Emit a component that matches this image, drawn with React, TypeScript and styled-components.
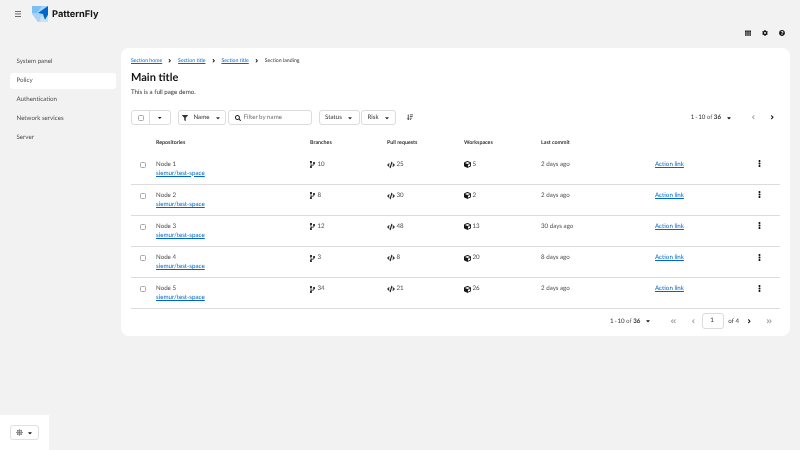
import React from 'react';
import styled, { createGlobalStyle } from 'styled-components';
import {
  FaCaretDown, FaFilter, FaSearch, FaCodeBranch, FaCode, FaCube, FaEllipsisV, FaTh, FaCog,
  FaQuestionCircle, FaAngleLeft, FaAngleRight, FaAngleDoubleLeft, FaAngleDoubleRight, FaSun, FaSortAmountDown,
} from 'react-icons/fa';

const Global = createGlobalStyle`
  html, body { margin: 0; padding: 0; background: #f2f2f2; }
  body { font-family: "Lato", "Liberation Sans", sans-serif; font-size: 6.2px; color: #151515; text-rendering: geometricPrecision; }
  * { box-sizing: border-box; }
`;

const Page = styled.div`
  width: 800px; height: 450px; display: grid; overflow: hidden; will-change: transform;
  grid-template-columns: 121px 1fr; grid-template-rows: 48px 1fr;
`;
const Masthead = styled.header`
  grid-column: 1 / 3; display: flex; align-items: flex-start; padding: 6px 0 0 15px;
`;
const Burger = styled.svg`
  margin-top: 5px; width: 6px; height: 6px;
`;
const Brand = styled.div`
  display: flex; align-items: center; gap: 3px; margin-left: 11px; height: 16px;
`;
const BrandName = styled.span`
  font-family: "Inter", sans-serif; font-size: 9.3px; font-weight: 700; color: #151515;
`;
const Tools = styled.div`
  margin-left: auto; display: flex; gap: 11px; padding: 24px 15px 0 0; font-size: 6px; color: #151515;
  span { display: flex; }
`;
const Side = styled.aside`
  display: flex; flex-direction: column;
`;
const Nav = styled.nav`
  display: flex; flex-direction: column; padding: 6px 5px 0 10px; gap: 3px;
`;
const NavItem = styled.div<{ $active?: boolean }>`
  height: 16px; line-height: 16px; padding-left: 6.5px; border-radius: 3px; font-size: 6.2px; color: #4d4d4d;
  background: ${p => (p.$active ? '#fff' : 'transparent')};
`;
const ThemeDock = styled.div`
  margin-top: auto; width: 49px; height: 35px; background: #fff; padding: 10px;
`;
const ThemeButton = styled.div`
  width: 29px; height: 15px; border: 1px solid #e0e0e0; border-radius: 3px; display: flex; align-items: center;
  justify-content: center; gap: 4px; color: #707070; font-size: 7px;
  svg + svg { font-size: 6px; color: #151515; }
`;
const Card = styled.main`
  width: 669px; height: 288px; background: #fff; border-radius: 8px; padding: 9.5px 10px 0;
  display: flex; flex-direction: column;
`;
const Crumbs = styled.div`
  display: flex; align-items: center; height: 7px; font-size: 5.2px; color: #333;
`;
const Link = styled.a`
  color: #0066cc; text-decoration: underline; text-underline-offset: 1px;
`;
const CrumbSep = styled.span`
  display: flex; margin: 0 5.2px; font-size: 5.5px; color: #151515;
`;
const Title = styled.h1`
  margin: 5.5px 0 0; font-size: 11px; line-height: 15px; font-weight: 700; color: #151515;
`;
const Lead = styled.p`
  margin: 3.5px 0 0; font-size: 6.2px; line-height: 8px; color: #333;
`;
const Toolbar = styled.div`
  display: flex; align-items: center; margin-top: 13.5px; height: 15px; gap: 2px;
`;
const Control = styled.div<{ $w: number; $ml?: number }>`
  width: ${p => p.$w}px; height: 15px; margin-left: ${p => p.$ml ?? 0}px; border: 1px solid #dcdcdc; border-radius: 3px;
  display: flex; align-items: center; justify-content: center; gap: 5px; font-size: 6.2px; color: #333; background: #fff;
  svg { flex: none; }
`;
const SplitControl = styled.div`
  display: flex; width: 40px; height: 15px; border: 1px solid #dcdcdc; border-radius: 3px; align-items: center;
`;
const SplitPart = styled.div<{ $divider?: boolean }>`
  flex: ${p => (p.$divider ? '0 0 18px' : 1)}; height: 100%; display: flex; align-items: center; justify-content: center;
  border-right: ${p => (p.$divider ? '1px solid #dcdcdc' : 'none')}; font-size: 5.5px; color: #151515;
`;
const Check = styled.span`
  display: block; width: 6px; height: 6px; border: 1px solid #a8a8a8; border-radius: 1.5px; background: #fff;
`;
const Search = styled(Control)`
  justify-content: flex-start; padding-left: 6.5px; gap: 2.5px; color: #6a6e73; svg { color: #151515; }
`;
const SortIcon = styled.span`
  display: flex; margin-left: 8.5px; font-size: 6.5px; color: #333;
`;
const PagerText = styled.span`
  word-spacing: -0.6px; letter-spacing: -0.1px;
`;
const Pager = styled.div`
  margin-left: auto; display: flex; align-items: center; padding-right: 5px; font-size: 6.2px; color: #333;
`;
const Muted = styled.span`
  color: #555; margin: 0 1.5px;
`;
const Strong = styled.span`
  font-weight: 700;
`;
const Caret = styled.span`
  display: flex; margin-left: 5px; font-size: 6px; color: #151515;
`;
const PageBtn = styled.span<{ $off?: boolean; $ml: number }>`
  display: flex; margin-left: ${p => p.$ml}px; font-size: 6.5px; color: ${p => (p.$off ? '#a8a8a8' : '#151515')};
`;
const Grid = `display: grid; grid-template-columns: 25px 154px 77px 77px 77px 114px 104px 21px;`;
const Head = styled.div`
  ${Grid} margin-top: 11px; height: 17.5px; padding-bottom: 4.5px; align-items: center; font-size: 5.3px; font-weight: 700; color: #333;
`;
const Row = styled.div`
  ${Grid} height: 31.2px; padding-top: 7px; border-bottom: 1px solid #dcdcdc; font-size: 6.2px; color: #4d4d4d;
`;
const CheckCell = styled.div`
  padding: 1px 0 0 9px;
`;
const NameCell = styled.div`
  display: flex; flex-direction: column; gap: 1px; line-height: 8px;
`;
const Cell = styled.div`
  display: flex; align-items: center; gap: 1.5px; height: 8px; line-height: 8px;
  svg { color: #151515; flex: none; }
`;
const BranchIcon = styled(FaCodeBranch)`
  margin-left: -1px;
`;
const Kebab = styled.div`
  font-size: 7px; color: #151515; margin: -0.5px 0 0 -3.5px; line-height: 8px;
`;
const Footer = styled.div`
  display: flex; align-items: center; justify-content: flex-end; height: 24px; font-size: 6.2px; color: #333; padding-right: 8px;
`;
const PageInput = styled.div`
  width: 22px; height: 16px; margin: 0 4px 0 6px; border: 1px solid #dcdcdc; border-radius: 3px; padding-left: 7px; line-height: 14px;
`;

const rows = [
  ['Node 1', '10', '25', '5', '2 days ago'],
  ['Node 2', '8', '30', '2', '2 days ago'],
  ['Node 3', '12', '48', '13', '30 days ago'],
  ['Node 4', '3', '8', '20', '8 days ago'],
  ['Node 5', '34', '21', '26', '2 days ago'],
];

const Logo = () => (
  <svg width="17" height="16" viewBox="0 0 17 16">
    <polygon points="0,0 16,0 16,16 6,16 0,8" fill="#a9d2f5" />
    <polygon points="0,0 10,0 5,7 0,7" fill="#7cc0f2" />
    <polygon points="16,0 6,7 11,8 13,14 16,9" fill="#0066cc" />
    <polygon points="10,9 13,14 16,9 16,16 7,16" fill="#c4e2f8" />
  </svg>
);

export default function App() {
  return (
    <Page>
      <Global />
      <Masthead>
        <Burger viewBox="0 0 6 6" fill="#333">
          <rect y="0.2" width="6" height="0.7" /><rect y="2.6" width="6" height="0.7" /><rect y="5" width="6" height="0.7" />
        </Burger>
        <Brand><Logo /><BrandName>PatternFly</BrandName></Brand>
        <Tools>
          <span><FaTh /></span>
          <span><FaCog /></span>
          <span><FaQuestionCircle /></span>
        </Tools>
      </Masthead>
      <Side>
        <Nav>
          <NavItem>System panel</NavItem>
          <NavItem $active>Policy</NavItem>
          <NavItem>Authentication</NavItem>
          <NavItem>Network services</NavItem>
          <NavItem>Server</NavItem>
        </Nav>
        <ThemeDock>
          <ThemeButton><FaSun /><FaCaretDown /></ThemeButton>
        </ThemeDock>
      </Side>
      <Card>
        <Crumbs>
          <Link>Section home</Link><CrumbSep><FaAngleRight /></CrumbSep>
          <Link>Section title</Link><CrumbSep><FaAngleRight /></CrumbSep>
          <Link>Section title</Link><CrumbSep><FaAngleRight /></CrumbSep>
          <span>Section landing</span>
        </Crumbs>
        <Title>Main title</Title>
        <Lead>This is a full page demo.</Lead>
        <Toolbar>
          <SplitControl>
            <SplitPart $divider><Check /></SplitPart>
            <SplitPart><FaCaretDown /></SplitPart>
          </SplitControl>
          <Control $w={48} $ml={4.5}><FaFilter size={6} />Name<FaCaretDown size={6} /></Control>
          <Search $w={84}><FaSearch size={6} />Filter by name</Search>
          <Control $w={41} $ml={5}>Status<FaCaretDown size={6} /></Control>
          <Control $w={35} $ml={-0.5}>Risk<FaCaretDown size={6} /></Control>
          <SortIcon><FaSortAmountDown /></SortIcon>
          <Pager>
            <PagerText>1 - 10</PagerText><Muted>of</Muted><Strong>36</Strong><Caret><FaCaretDown /></Caret>
            <PageBtn $off $ml={18}><FaAngleLeft /></PageBtn>
            <PageBtn $ml={12}><FaAngleRight /></PageBtn>
          </Pager>
        </Toolbar>
        <Head>
          <span /><span>Repositories</span><span>Branches</span><span>Pull requests</span><span>Workspaces</span><span>Last commit</span>
        </Head>
        {rows.map(r => (
          <Row key={r[0]}>
            <CheckCell><Check /></CheckCell>
            <NameCell><span>{r[0]}</span><Link>siemur/test-space</Link></NameCell>
            <Cell><BranchIcon size={7} />{r[1]}</Cell>
            <Cell><FaCode size={8} />{r[2]}</Cell>
            <Cell><FaCube size={7} />{r[3]}</Cell>
            <Cell>{r[4]}</Cell>
            <Cell><Link>Action link</Link></Cell>
            <Kebab><FaEllipsisV /></Kebab>
          </Row>
        ))}
        <Footer>
          <PagerText>1 - 10</PagerText><Muted>of</Muted><Strong>36</Strong><Caret><FaCaretDown /></Caret>
          <PageBtn $off $ml={19}><FaAngleDoubleLeft /></PageBtn>
          <PageBtn $off $ml={13}><FaAngleLeft /></PageBtn>
          <PageInput>1</PageInput>
          of 4
          <PageBtn $ml={7}><FaAngleRight /></PageBtn>
          <PageBtn $off $ml={13}><FaAngleDoubleRight /></PageBtn>
        </Footer>
      </Card>
    </Page>
  );
}
